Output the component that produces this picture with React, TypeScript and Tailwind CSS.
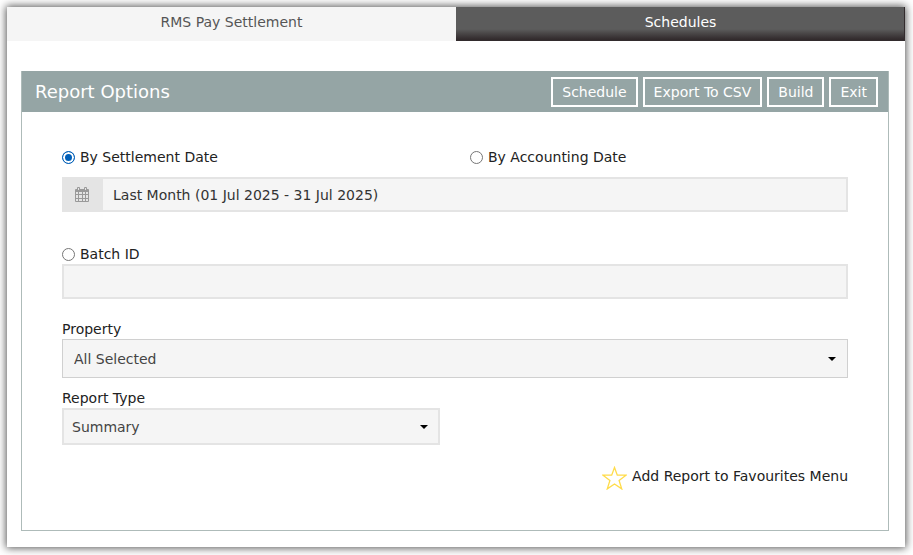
import { useState } from "react";

const actions = ["Schedule", "Export To CSV", "Build", "Exit"];

const CalendarIcon = () => (
  <svg width="14" height="15" viewBox="0 0 14 15">
    <path
      fill="#999"
      fillRule="evenodd"
      d="M1 2h12q1 0 1 1v11q0 1-1 1H1q-1 0-1-1V3q0-1 1-1zM1 5v2h2V5zM4 5v2h3V5zM8 5v2h2V5zM11 5v2h2V5zM1 8v3h2V8zM4 8v3h3V8zM8 8v3h2V8zM11 8v3h2V8zM1 12v2h2v-2zM4 12v2h3v-2zM8 12v2h2v-2zM11 12v2h2v-2z"
    />
    <path d="M2 1q0-1 1-1h1q1 0 1 1v3H2zM9 1q0-1 1-1h1q1 0 1 1v3H9z" fill="#999" />
    <path d="M3 1h1v2H3zM10 1h1v2h-1z" fill="#e4e4e4" />
  </svg>
);

const StarIcon = () => (
  <svg width="25" height="24" viewBox="0 0 25 24" fill="none" stroke="#ffdc4a" strokeWidth="1.3">
    <path d="M12.5 1.5l2.8 7.700h8.700l-6.900 5.300 2.600 8.400-7.200-4.900-7.200 4.900 2.600-8.400L1 9.200h8.700z" />
  </svg>
);

const Caret = () => (
  <svg
    className="absolute right-3 top-1/2 -translate-y-1/2 pointer-events-none"
    width="8"
    height="4"
    viewBox="0 0 8 4"
  >
    <path d="M0 0h8L4 4z" fill="#000" />
  </svg>
);

const Radio = ({ id, label, mode, setMode }: any) => (
  <div className="flex items-center gap-[5px]">
    <input
      type="radio"
      id={id}
      name="mode"
      checked={mode === id}
      onChange={() => setMode(id)}
      className="appearance-none size-[13px] rounded-full border border-[#767676] bg-white checked:border-[#005fb8] checked:bg-[#005fb8] checked:shadow-[inset_0_0_0_2px_#fff]"
    />
    <label htmlFor={id}>{label}</label>
  </div>
);

const App = () => {
  const [tab, setTab] = useState("settlement");
  const [mode, setMode] = useState("settlementDate");
  const [dateRange, setDateRange] = useState(
    "Last Month (01 Jul 2025 - 31 Jul 2025)"
  );
  const [batchId, setBatchId] = useState("");

  const tabClass = (active: boolean) =>
    `flex-1 h-[34px] pb-1 ${
      active
        ? "bg-[#f5f5f5] text-[#555]"
        : "bg-linear-to-b from-[#5c5c5c] from-65% to-[#322b2d] to-95% text-white shadow-[inset_-1px_0_0_#322b2d]"
    }`;

  return (
    <div className="p-[7px] pr-2 pb-2 bg-white font-['Verdana','DejaVu_Sans',sans-serif] text-sm leading-5 text-[#222]">
      <div className="bg-white pb-4 shadow-[0_0_8px_1px_#555]">
        <nav className="flex">
          <button
            className={tabClass(tab === "settlement")}
            onClick={() => setTab("settlement")}
          >
            RMS Pay Settlement
          </button>
          <button
            className={tabClass(tab === "schedules")}
            onClick={() => setTab("schedules")}
          >
            Schedules
          </button>
        </nav>
        <section className="mt-[30px] ml-[14px] mr-4 border border-t-0 border-[#aebbb9]">
          <header className="flex items-center justify-between h-[41px] bg-[#95a5a5] pl-[13px] pr-[10px] text-white">
            <h1 className="text-lg">Report Options</h1>
            <div className="flex gap-[5px]">
              {actions.map((action) => (
                <button
                  key={action}
                  className="h-[30px] border-2 border-white px-[9px]"
                >
                  {action}
                </button>
              ))}
            </div>
          </header>
          <form
            className="px-10 pt-[35px] pb-10"
            onSubmit={(e) => e.preventDefault()}
          >
            <div className="grid grid-cols-2 gap-[30px]">
              <Radio
                id="settlementDate"
                label="By Settlement Date"
                mode={mode}
                setMode={setMode}
              />
              <Radio
                id="accountingDate"
                label="By Accounting Date"
                mode={mode}
                setMode={setMode}
              />
            </div>
            <div className="flex mt-[10px] h-[35px] border-2 border-[#e4e4e4] bg-[#f5f5f5]">
              <span className="flex items-center w-[39px] pl-[11px] bg-[#e4e4e4]">
                <CalendarIcon />
              </span>
              <input
                type="text"
                aria-label="Date range"
                value={dateRange}
                onChange={(e) => setDateRange(e.target.value)}
                className="flex-1 px-[10px] text-[#333] outline-none"
              />
            </div>
            <div className="mt-8">
              <Radio
                id="batch"
                label="Batch ID"
                mode={mode}
                setMode={setMode}
              />
            </div>
            <input
              type="text"
              aria-label="Batch ID"
              value={batchId}
              onChange={(e) => setBatchId(e.target.value)}
              className="block w-full h-[35px] border-2 border-[#e4e4e4] bg-[#f5f5f5] px-2 outline-none"
            />
            <label htmlFor="property" className="block mt-5">
              Property
            </label>
            <div className="relative">
              <select
                id="property"
                className="block appearance-none w-full h-[39px] border border-[#d0d0d0] bg-[#f5f5f5] px-[11px] text-[#444]"
              >
                <option>All Selected</option>
              </select>
              <Caret />
            </div>
            <div className="grid grid-cols-2 gap-[30px] mt-[10px]">
              <div>
                <label htmlFor="reportType" className="block">
                  Report Type
                </label>
                <div className="relative">
                  <select
                    id="reportType"
                    className="block appearance-none w-full h-[37px] border-2 border-[#e4e4e4] bg-[#f5f5f5] px-2 text-[#444]"
                  >
                    <option>Summary</option>
                  </select>
                  <Caret />
                </div>
              </div>
            </div>
            <div className="flex justify-end mt-[21px]">
              <button type="button" className="flex items-start gap-[5px]">
                <StarIcon />
                Add Report to Favourites Menu
              </button>
            </div>
          </form>
        </section>
      </div>
    </div>
  );
};

export default App;
